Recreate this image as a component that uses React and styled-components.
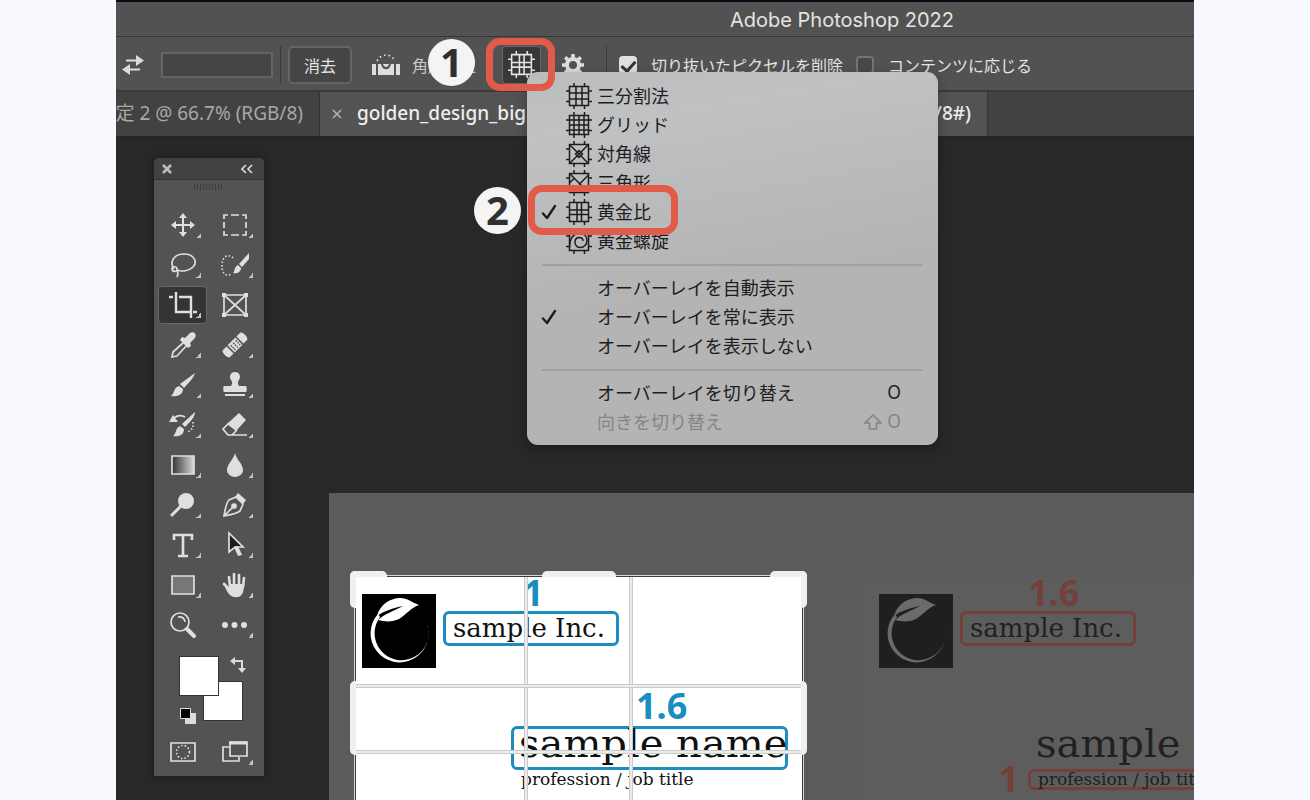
import React, { useState } from "react";
import styled, { createGlobalStyle, css } from "styled-components";

const GlobalStyle = createGlobalStyle`
  * {
    box-sizing: border-box;
  }
  body {
    margin: 0;
    background: #f7f9ff;
    font-family: "Noto Sans", "Noto Sans CJK JP", sans-serif;
  }
  button {
    padding: 0;
    border: 0;
    background: none;
    color: inherit;
    font: inherit;
  }
`;

const gridInner = {
  thirds: "M10 3.5v19M16 3.5v19M3.5 10h19M3.5 16h19",
  grid: "M8 3.5v19M13 3.5v19M18 3.5v19M3.5 8h19M3.5 13h19M3.5 18h19",
  diagonal: "M3.5 3.5l19 19M22.5 3.5l-19 19M13 9.5l3.5 3.5-3.5 3.5-3.5-3.5z",
  triangle: "M3.5 3.5l19 19M22.5 5l-9.5 9.5M3.5 13l5-5",
  golden: "M11 3.5v19M15.5 3.5v19M3.5 11h19M3.5 15.5h19",
  spiral: "M3.5 20c0-8 3-14.5 10.500-14.500 4.500 0 7 3 7 7s-3 7-6.500 7-5.500-2.500-5.500-5.500 2-4.500 4.500-4.500 3.500 1.500 3.500 3.500",
};

const GridIcon = ({ type, size = 26 }) => (
  <svg width={size} height={size} viewBox="0 0 26 26" fill="none" stroke="currentColor" strokeWidth="1.5">
    <path d="M3.5 3.5h19v19h-19zM8 0v3.5M18.5 0v3.5M8 22.5V26M18.5 22.5V26M0 8h3.5M0 18.5h3.5M22.5 8H26M22.5 18.5H26" />
    <path d={gridInner[type]} />
  </svg>
);

const Check = () => (
  <svg width="16" height="16" viewBox="0 0 16 16" fill="none" stroke="currentColor" strokeWidth="2.4" strokeLinecap="round" strokeLinejoin="round">
    <path d="M2 9.5l4 4.5L14 2" />
  </svg>
);

const Leaf = ({ color }) => (
  <svg width="74" height="74" viewBox="0 0 74 74" fill={color}>
    <path d="M65 30A29 29 0 1 1 16 20L18 23A27 27 0 1 0 65 30z" />
    <path d="M15 22C18 10 29 4 38 4c8 0 11 4 19 7-9 3-13 10-20 14-6 3-14 3-21 1 6-6 16-9 25-14C31 14 22 17 15 22z" />
  </svg>
);

const tools = [
  {
    name: "移動",
    icon: (
      <>
        <path strokeWidth="2" d="M14 4v20M4 14h20" />
        <path fill="currentColor" stroke="none" d="M14 2l4 5h-8zM14 26l4-5h-8zM2 14l5-4v8zM26 14l-5-4v8z" />
      </>
    ),
  },
  { name: "長方形選択", icon: <path d="M3 8V4h4M10 4h8M21 4h4v4M25 11v6M25 20v4h-4M18 24h-8M7 24H3v-4M3 17v-6" /> },
  { name: "なげなわ", icon: <path d="M5 18C0 11 5 3 15 3s14 8 9 13c-4 4-11 5-16 3M8 19c0 2-5 2-5-1s5-3 5 0c0 3 2 4 0 8" /> },
  {
    name: "クイック選択",
    icon: (
      <>
        <path strokeDasharray="1.5 2" d="M12 7C9 3 1 4 1 14s4 11 10 9" />
        <path fill="currentColor" stroke="none" d="M28 2v6l-7 8-3-3zM17 14l3 3c0 4-4 6-8 5 2-2 1-6 5-8z" />
      </>
    ),
  },
  { name: "切り抜き", icon: <path strokeWidth="2.4" d="M7 1v20h14M0 6h4M10 6h12v21M24 21h4" /> },
  {
    name: "フレーム",
    icon: (
      <>
        <path d="M3 4h22v20H3zM3 4l22 20M25 4L3 24" />
        <path fill="currentColor" stroke="none" d="M1 2h4v4H1zM23 2h4v4h-4zM1 22h4v4H1zM23 22h4v4h-4z" />
      </>
    ),
  },
  {
    name: "スポイト",
    icon: (
      <>
        <path d="M15 11L4 21l-1 5 5-1 10-11" />
        <path fill="currentColor" stroke="none" d="M13 6l3 1 5-5c4-2 7 1 5 5l-5 5 1 3-3 2-8-8z" />
      </>
    ),
  },
  {
    name: "修復ブラシ",
    icon: (
      <g transform="rotate(-45 14 14)">
        <path fill="currentColor" stroke="none" d="M2 9h5v10H2c-3 0-3-10 0-10zM8.5 9h11v10h-11zM21 9h5c3 0 3 10 0 10h-5z" />
        <path stroke="#535353" strokeWidth="1.5" strokeDasharray="1.5 2" d="M10 12h9M10 14.5h9M10 17h9" />
      </g>
    ),
  },
  { name: "ブラシ", icon: <path fill="currentColor" stroke="none" d="M26 2L11 13l4 4C20 12 25 6 26 2zM10 15l4 3c0 6-6 8-12 7 4-3 2-8 8-10z" /> },
  {
    name: "スタンプ",
    icon: <path fill="currentColor" stroke="none" d="M14 1c5 0 6 5 4 8-2 2-1 4 0 6h7c1 0 1 6 0 6H3c-1 0-1-6 0-6h7c1-2 2-4 0-6-2-3-1-8 4-8zM4 23h20v2H4z" />,
  },
  {
    name: "ヒストリーブラシ",
    icon: (
      <>
        <path fill="currentColor" stroke="none" d="M26 1L13 13l3 3C21 11 26 6 26 1zM11 15l4 3c0 6-5 8-11 7 4-3 2-8 7-10zM0 11l4-7 5 7z" />
        <path d="M5 7c3-3 8-3 11-1" />
        <path strokeDasharray="1.5 2" d="M24 11v6l-6 5" />
      </>
    ),
  },
  {
    name: "消しゴム",
    icon: (
      <>
        <path fill="currentColor" stroke="none" d="M18 2l7 7-10 11-9-7z" />
        <path d="M8 12l-6 6 5 6h4l5-5M7 24h19" />
      </>
    ),
  },
  {
    name: "グラデーション",
    icon: (
      <>
        <defs>
          <linearGradient id="gradTool">
            <stop offset="0" stopColor="#333" />
            <stop offset="1" stopColor="#d8d8d8" />
          </linearGradient>
        </defs>
        <path fill="url(#gradTool)" d="M3 5h22v18H3z" />
      </>
    ),
  },
  { name: "ぼかし", icon: <path fill="currentColor" stroke="none" d="M14 2c1 6 8 11 8 17 0 4-4 7-8 7s-8-3-8-7c0-6 7-11 8-17z" /> },
  {
    name: "覆い焼き",
    icon: (
      <>
        <circle cx="17" cy="10" r="8" fill="currentColor" stroke="none" />
        <path strokeWidth="3" strokeLinecap="round" d="M12 15l-9 9" />
      </>
    ),
  },
  {
    name: "ペン",
    icon: (
      <>
        <path d="M3 25c1-6 2-13 5-16l7-3 7 7-3 7c-4 3-10 4-16 5zl9-9" />
        <circle cx="13" cy="15" r="2" fill="currentColor" />
        <path fill="currentColor" stroke="none" d="M17 2l8 7-3 4-8-7z" />
      </>
    ),
  },
  { name: "文字", icon: <path fill="none" strokeWidth="2.6" d="M5 9V4h18v5M14 4v21M9 25h10" /> },
  {
    name: "パス選択",
    icon: (
      <>
        <path fill="#1b1b1b" d="M8 2l14 14h-8l-6 5z" />
        <path fill="currentColor" stroke="none" d="M13 16l4-1 4 9-4 1z" />
      </>
    ),
  },
  { name: "長方形", icon: <path fill="#777" d="M3 5h22v18H3z" /> },
  {
    name: "手のひら",
    icon: (
      <>
        <path strokeWidth="2.6" strokeLinecap="round" d="M9 15L8 6M13 14V3M18 14V4M22 16l1-9M8 18l-5-5" />
        <path fill="currentColor" stroke="none" d="M8 13h15c0 6-1 12-6 13-7 1-10-3-13-10l4 2z" />
      </>
    ),
  },
  {
    name: "ズーム",
    icon: (
      <>
        <circle cx="11" cy="11" r="9" />
        <path d="M9 6c4-1 7 2 7 5" />
        <path strokeWidth="4" strokeLinecap="round" d="M18 18l7 7" />
      </>
    ),
  },
  { name: "その他", icon: <path fill="currentColor" stroke="none" d="M4 11a3 3 0 110 6 3 3 0 010-6zM13.5 11a3 3 0 110 6 3 3 0 010-6zM23 11a3 3 0 110 6 3 3 0 010-6z" /> },
];

const noCorner = ["フレーム", "ズーム", "クイックマスク"];

const Tool = ({ name, selected, onClick, children }) => (
  <ToolButton type="button" aria-label={name} $selected={selected} onClick={onClick}>
    <ToolSvg viewBox="0 0 28 28">{children}</ToolSvg>
    {!noCorner.includes(name) && <Corner />}
  </ToolButton>
);

const ToolPalette = () => {
  const [active, setActive] = useState("切り抜き");

  return (
    <Palette>
      <PaletteHeader>
        <button type="button" aria-label="閉じる">
          <svg width="12" height="12" viewBox="0 0 12 12" stroke="#bdbdbd" strokeWidth="2.6">
            <path d="M2 2l8 8M10 2l-8 8" />
          </svg>
        </button>
        <button type="button" aria-label="折りたたむ">
          <svg width="12" height="10" viewBox="0 0 12 10" fill="none" stroke="#dcdcdc" strokeWidth="1.6">
            <path d="M5 1L1 5l4 4M11 1L7 5l4 4" />
          </svg>
        </button>
      </PaletteHeader>
      <Grip />
      <ToolGrid>
        {tools.map((tool) => (
          <Tool key={tool.name} name={tool.name} selected={tool.name === active} onClick={() => setActive(tool.name)}>
            {tool.icon}
          </Tool>
        ))}
      </ToolGrid>
      <Swatches>
        <Swatch type="button" aria-label="背景色" $x={49} $y={37} />
        <Swatch type="button" aria-label="描画色" $x={25} $y={12} />
        <SwapIcon viewBox="0 0 16 16">
          <path fill="none" stroke="#dcdcdc" strokeWidth="2" d="M4 4h8v8" />
          <path fill="#dcdcdc" d="M5 0v8L0 4zM8 11h8l-4 5z" />
        </SwapIcon>
        <ResetIcon viewBox="0 0 16 16">
          <path fill="#dcdcdc" d="M5 5h11v11H5z" />
          <path fill="#000" stroke="#dcdcdc" d="M.5.5h10v10H.5z" />
        </ResetIcon>
      </Swatches>
      <ToolGrid>
        <Tool name="クイックマスク">
          <path d="M2 5h24v18H2z" />
          <circle cx="14" cy="14" r="6.5" strokeDasharray="1.5 2" />
        </Tool>
        <Tool name="スクリーンモード">
          <path d="M8 9H2v14h16v-4M9 4h17v14H9z" />
          <path strokeWidth="3" d="M8 5h18" />
        </Tool>
      </ToolGrid>
    </Palette>
  );
};

const overlayTypes = [
  { label: "三分割法", icon: "thirds" },
  { label: "グリッド", icon: "grid" },
  { label: "対角線", icon: "diagonal" },
  { label: "三角形", icon: "triangle" },
  { label: "黄金比", icon: "golden", checked: true },
  { label: "黄金螺旋", icon: "spiral" },
];

const MenuItem = ({ label, icon, checked, disabled, shortcut, children }) => (
  <Item type="button" role="menuitem" disabled={disabled}>
    <span>{checked && <Check />}</span>
    <span>{icon && <GridIcon type={icon} />}</span>
    <span>{label}</span>
    <Shortcut>{shortcut}</Shortcut>
    {children}
  </Item>
);

const OverlayMenu = () => (
  <Menu role="menu">
    {overlayTypes.map((item) => (
      <MenuItem key={item.label} {...item}>
        {item.checked && (
          <>
            <ItemFrame />
            <ItemBadge>2</ItemBadge>
          </>
        )}
      </MenuItem>
    ))}
    <Divider />
    <MenuItem label="オーバーレイを自動表示" />
    <MenuItem label="オーバーレイを常に表示" checked />
    <MenuItem label="オーバーレイを表示しない" />
    <Divider />
    <MenuItem label="オーバーレイを切り替え" shortcut="O" />
    <MenuItem
      label="向きを切り替え"
      disabled
      shortcut={
        <>
          <svg width="18" height="16" viewBox="0 0 18 16" fill="none" stroke="currentColor" strokeWidth="1.6">
            <path d="M9 1l8 8h-4.5v6h-7V9H1z" />
          </svg>
          O
        </>
      }
    />
  </Menu>
);

const OptionsBar = () => (
  <Options>
    <SwapButton type="button" aria-label="幅と高さを入れ替え">
      <svg width="22" height="20" viewBox="0 0 22 20">
        <path fill="none" stroke="#dcdcdc" strokeWidth="2" d="M4 5.5h12M6 14.5h12" />
        <path fill="#dcdcdc" d="M14 0l8 5.5-8 5.5zM8 9v11l-8-5.5z" />
      </svg>
    </SwapButton>
    <SizeInput aria-label="解像度" />
    <Separator />
    <ClearButton type="button">消去</ClearButton>
    <StraightenButton type="button">
      <svg width="28" height="22" viewBox="0 0 28 22">
        <path fill="#dcdcdc" d="M0 10h4v11H0zM6 10h3c1 7 9 7 10 0h3v11H6zM24 10h4v11h-4zM11 10h6c-1 4-5 4-6 0z" />
        <path fill="none" stroke="#dcdcdc" strokeWidth="1.6" strokeDasharray="1.6 3" d="M5 7C9-1 19-1 23 7" />
      </svg>
      角度補正
    </StraightenButton>
    <OverlayAnchor>
      <OverlayButton type="button" aria-label="オーバーレイオプション">
        <GridIcon type="golden" size={27} />
      </OverlayButton>
      <OverlayMenu />
      <ButtonFrame />
      <ButtonBadge>1</ButtonBadge>
    </OverlayAnchor>
    <GearButton type="button" aria-label="切り抜きオプション">
      <svg width="22" height="22" viewBox="0 0 22 22" fill="none" stroke="#dcdcdc">
        <circle cx="11" cy="11" r="6" strokeWidth="4" />
        <path strokeWidth="3.6" d="M11 0v4M11 18v4M0 11h4M18 11h4M3.2 3.2L6 6M16 16l2.800 2.800M3.2 18.800L6 16M16 6l2.800-2.800" />
      </svg>
    </GearButton>
    <Separator />
    <CheckLabel>
      <CheckBox defaultChecked />
      切り抜いたピクセルを削除
    </CheckLabel>
    <CheckLabel>
      <CheckBox />
      コンテンツに応じる
    </CheckLabel>
  </Options>
);

const App = () => (
  <>
    <GlobalStyle />
    <Window>
      <TitleBar>Adobe Photoshop 2022</TitleBar>
      <OptionsBar />
      <Tabs>
        <Tab>
          <TabName>定 2 @ 66.7% (RGB/8)</TabName>
        </Tab>
        <Tab $active>
          <button type="button" aria-label="タブを閉じる">
            <svg width="10" height="10" viewBox="0 0 10 10" stroke="#b4b4b4" strokeWidth="1.5">
              <path d="M1 1l8 8M9 1L1 9" />
            </svg>
          </button>
          <TabName>golden_design_big</TabName>
          <TabEnd>/8#)</TabEnd>
        </Tab>
      </Tabs>
      <Workspace>
        <ToolPalette />
        <Artboard>
          <Card $ink="#111" $accent="#1b8dc1" $active>
            <CardTop>
              <Logo $bg="#000">
                <Leaf color="#fff" />
              </Logo>
              <div>
                <Ratio $indent={80}>1</Ratio>
                <Company>sample Inc.</Company>
              </div>
            </CardTop>
            <Profile>
              <Ratio $indent={125}>1.6</Ratio>
              <PersonName $boxed>sample name</PersonName>
              <JobTitle>profession / job title</JobTitle>
            </Profile>
            <CropOverlay>
              <Guide $x="37.7%" />
              <Guide $x="61.3%" />
              <Guide $y="37.7%" />
              <Guide $y="61.3%" />
              <Handle $top $left $wide />
              <Handle $top $left />
              <Handle $top $middle $wide />
              <Handle $top $wide />
              <Handle $top />
              <Handle $middle $left />
              <Handle $middle />
            </CropOverlay>
          </Card>
          <Card $ink="#212121" $accent="#75403a">
            <CardTop>
              <Logo $bg="#1f1f1f">
                <Leaf color="#6b6b6b" />
              </Logo>
              <div>
                <Ratio $indent={68}>1.6</Ratio>
                <Company>sample Inc.</Company>
              </div>
            </CardTop>
            <Profile>
              <Ratio />
              <PersonName>sample name</PersonName>
              <JobTitle $boxed>
                <SideRatio>1</SideRatio>
                profession / job title
              </JobTitle>
            </Profile>
          </Card>
        </Artboard>
      </Workspace>
    </Window>
  </>
);

const Window = styled.main`
  display: flex;
  flex-direction: column;
  height: 100vh;
  margin: 0 116px;
  overflow: hidden;
  background: #282828;
  color: #e4e4e4;
`;

const TitleBar = styled.header`
  flex: none;
  padding: 3px 0 0 374px;
  border-top: 2px solid #0b0c18;
  border-bottom: 1px solid #363636;
  background: #525252;
  font: 20px/31px Inter, sans-serif;
  text-align: center;
`;

const Options = styled.div`
  display: flex;
  align-items: center;
  flex: none;
  height: 55px;
  padding: 2px 0 0 6px;
  border-bottom: 2px solid #3a3a3a;
  background: #525252;
  font-size: 16px;
  white-space: nowrap;
`;

const SwapButton = styled.button`
  display: flex;
  margin-right: 17px;
`;

const SizeInput = styled.input`
  width: 112px;
  height: 26px;
  border: 2px solid #646464;
  background: #454545;
  color: inherit;
`;

const Separator = styled.i`
  width: 1px;
  height: 38px;
  margin: 0 7px;
  background: #3a3a3a;
`;

const ClearButton = styled.button`
  width: 64px;
  height: 38px;
  border: 2px solid #646464;
  border-radius: 5px;
  background: #454545;
`;

const StraightenButton = styled.button`
  display: flex;
  align-items: center;
  gap: 12px;
  width: 130px;
  margin-left: 20px;
  color: #c8c8c8;
`;

const OverlayAnchor = styled.div`
  position: relative;
  z-index: 2;
`;

const OverlayButton = styled.button`
  display: flex;
  align-items: center;
  justify-content: center;
  width: 39px;
  height: 38px;
  border: 1px solid #666;
  border-radius: 4px;
  background: #383838;
`;

const GearButton = styled.button`
  display: flex;
  margin: 0 15px 0 21px;
`;

const CheckLabel = styled.label`
  display: flex;
  align-items: center;
  gap: 14px;
  margin: 0 8px 0 5px;
`;

const CheckBox = styled.input.attrs({ type: "checkbox" })`
  appearance: none;
  width: 18px;
  height: 18px;
  margin: 0;
  border: 2px solid #757575;
  border-radius: 4px;
  background: #484848;

  &:checked {
    border-color: #e0e0e0;
    background: #e0e0e0;
  }

  &:checked::after {
    content: "";
    display: block;
    width: 6px;
    height: 11px;
    margin: 0 auto;
    border: solid #333;
    border-width: 0 3px 3px 0;
    transform: rotate(42deg);
  }
`;

const frame = css`
  position: absolute;
  z-index: 3;
  border: 7px solid #e25b48;
  border-radius: 14px;
  pointer-events: none;
`;

const badge = css`
  position: absolute;
  z-index: 3;
  width: 47px;
  height: 47px;
  border-radius: 50%;
  background: #f4f4f4;
  color: #303030;
  font-size: 40px;
  font-weight: 700;
  line-height: 46px;
  text-align: center;
`;

const ButtonFrame = styled.i`
  ${frame}
  inset: -8px -14px -7px -16px;
`;

const ButtonBadge = styled.b`
  ${badge}
  top: -7px;
  right: 66px;
`;

const ItemFrame = styled.i`
  ${frame}
  inset: -13px 260px -8px 1px;
`;

const ItemBadge = styled.b`
  ${badge}
  top: -11px;
  left: -53px;
`;

const Menu = styled.div`
  position: absolute;
  top: 26px;
  left: 25px;
  width: 411px;
  padding: 10px 0 8px;
  border-radius: 11px;
  background: linear-gradient(170deg, #bbbcbd, #c0c1c3 15%, #b4b4b4 55%);
  box-shadow: 0 4px 12px rgba(0, 0, 0, 0.3);
  color: #1d1d1d;
  font-size: 18px;
`;

const Item = styled.button`
  position: relative;
  display: grid;
  grid-template-columns: 25px 31px 1fr auto;
  align-items: center;
  width: 100%;
  height: 29px;
  padding: 0 37px 0 14px;
  line-height: 28px;
  text-align: left;

  > span {
    display: flex;
    align-items: center;
  }

  &:disabled {
    color: #858585;
  }
`;

const Shortcut = styled.span`
  gap: 5px;
  font-family: Inter, sans-serif;
`;

const Divider = styled.hr`
  height: 2px;
  margin: 8px 15px;
  border: 0;
  background: #a0a0a0;
`;

const Tabs = styled.nav`
  display: flex;
  flex: none;
  height: 45px;
  border-bottom: 1px solid #232323;
  background: #424242;
`;

const Tab = styled.div`
  display: flex;
  align-items: center;
  flex: ${({ $active }) => ($active ? "0 0 668px" : "0 0 204px")};
  justify-content: ${({ $active }) => ($active ? "flex-start" : "flex-end")};
  gap: 15px;
  padding: 0 16px 3px 12px;
  overflow: hidden;
  border-right: 1px solid #353535;
  background: ${({ $active }) => ($active ? "#535353" : "#424242")};
  color: ${({ $active }) => ($active ? "#eee" : "#a8a8a8")};
  font-weight: ${({ $active }) => ($active ? 500 : 400)};
`;

const TabName = styled.span`
  font-size: 19px;
  line-height: 24px;
  white-space: nowrap;
`;

const TabEnd = styled(TabName)`
  margin-left: auto;
`;

const Workspace = styled.section`
  position: relative;
  flex: 1;
  min-height: 0;
  padding: 356px 0 0 213px;
  overflow: hidden;
`;

const Palette = styled.aside`
  position: absolute;
  top: 21px;
  left: 38px;
  width: 110px;
  padding-bottom: 5px;
  border-radius: 5px 5px 0 0;
  background: #535353;
  box-shadow: 0 0 6px 2px rgba(0, 0, 0, 0.25);
`;

const PaletteHeader = styled.div`
  display: flex;
  align-items: center;
  justify-content: space-between;
  height: 22px;
  padding: 0 11px 0 7px;
  border-bottom: 1px solid #333;
  border-radius: 5px 5px 0 0;
  background: #424242;

  button {
    display: flex;
  }
`;

const Grip = styled.div`
  width: 30px;
  height: 6px;
  margin: 4px auto 16px;
  background: repeating-linear-gradient(90deg, #3b3b3b 0 1px, #535353 1px 3px);
`;

const ToolGrid = styled.div`
  display: grid;
  grid-template-columns: 49px 49px;
  gap: 2px 3px;
  padding: 0 4px;
`;

const ToolButton = styled.button`
  position: relative;
  display: flex;
  align-items: center;
  justify-content: center;
  height: 38px;
  border: 1px solid ${({ $selected }) => ($selected ? "#686868" : "transparent")};
  border-radius: 4px;
  background: ${({ $selected }) => ($selected ? "#343434" : "transparent")};
  color: #dfdfdf;
`;

const ToolSvg = styled.svg`
  width: 28px;
  height: 28px;
  fill: none;
  stroke: currentColor;
  stroke-width: 1.7;
`;

const Corner = styled.i`
  position: absolute;
  right: 5px;
  bottom: 5px;
  width: 5px;
  height: 5px;
  background: linear-gradient(135deg, transparent 50%, #c4c4c4 50%);
`;

const Swatches = styled.div`
  position: relative;
  height: 89px;
`;

const Swatch = styled.button`
  position: absolute;
  top: ${({ $y }) => $y}px;
  left: ${({ $x }) => $x}px;
  width: 40px;
  height: 40px;
  border: 1px solid #333;
  background: #fff;
`;

const SwapIcon = styled.svg`
  position: absolute;
  top: 13px;
  left: 76px;
  width: 16px;
  height: 16px;
`;

const ResetIcon = styled(SwapIcon)`
  top: 64px;
  left: 26px;
`;

const Artboard = styled.div`
  display: flex;
  gap: 60px;
  height: 420px;
  padding: 84px 0 0 27px;
  background: #5b5b5b;
`;

const Card = styled.article`
  --ink: ${({ $ink }) => $ink};
  --accent: ${({ $accent }) => $accent};
  position: relative;
  flex: none;
  width: 446px;
  height: 283px;
  padding-left: ${({ $active }) => ($active ? 6 : 17)}px;
  background: ${({ $active }) => ($active ? "#fff" : "#5d5d5d")};
  box-shadow: ${({ $active }) => ($active ? "0 0 0 1px #3a3a3f, 0 0 0 2px #d8d8d8" : "none")};
  color: var(--ink);
  font-family: "DejaVu Serif", serif;
  white-space: nowrap;
`;

const CardTop = styled.div`
  display: flex;
  align-items: flex-start;
  gap: 7px;
`;

const Logo = styled.div`
  display: flex;
  margin-top: 17px;
  background: ${({ $bg }) => $bg};
`;

const Ratio = styled.div`
  height: 34px;
  padding-left: ${({ $indent }) => $indent || 0}px;
  color: var(--accent);
  font: 700 36px/32px "Noto Sans", sans-serif;
`;

const box = css`
  border: 3px solid ${({ $boxed = false }) => ($boxed ? "var(--accent)" : "transparent")};
  border-radius: 6px;
`;

const Company = styled.div.attrs({ $boxed: true })`
  ${box}
  width: 176px;
  padding-left: 7px;
  font-size: 26px;
  line-height: 29px;
`;

const Profile = styled.div`
  width: 277px;
  margin: 22px 0 0 149px;
`;

const PersonName = styled.div`
  ${box}
  width: 277px;
  margin-top: 2px;
  padding: 0 0 10px 5px;
  font-size: 40px;
  line-height: 28px;
`;

const JobTitle = styled.div`
  ${box}
  position: relative;
  margin-top: -1px;
  padding-left: 7px;
  font-size: 17px;
  line-height: 15px;
`;

const SideRatio = styled.b`
  position: absolute;
  top: -9px;
  right: 100%;
  padding-right: 12px;
  color: var(--accent);
  font: 700 36px/32px "Noto Sans", sans-serif;
`;

const CropOverlay = styled.div`
  position: absolute;
  inset: 0;
`;

const Guide = styled.i`
  position: absolute;
  top: ${({ $y }) => $y || 0};
  left: ${({ $x }) => $x || 0};
  width: ${({ $x }) => ($x ? "4px" : "100%")};
  height: ${({ $x }) => ($x ? "100%" : "4px")};
  border: solid #cacaca;
  border-width: ${({ $x }) => ($x ? "0 1px" : "1px 0")};
  background: #ececec;
`;

const Handle = styled.i`
  position: absolute;
  width: ${({ $wide, $middle }) => ($wide ? ($middle ? 74 : 37) : 6)}px;
  height: ${({ $wide, $middle }) => ($wide ? 6 : $middle ? 74 : 37)}px;
  border-radius: ${({ $wide, $left }) => ($wide ? "5px 5px 0 0" : $left ? "5px 0 0 5px" : "0 5px 5px 0")};
  background: #f0f0f0;
  ${({ $top, $middle, $wide }) => ($top ? "top: -6px;" : $middle && !$wide && "top: 104px;")}
  ${({ $left, $middle, $wide }) =>
    $middle && $wide ? "left: calc(50% - 37px);" : $left ? "left: -6px;" : "right: -5px;"}
`;

export default App;
